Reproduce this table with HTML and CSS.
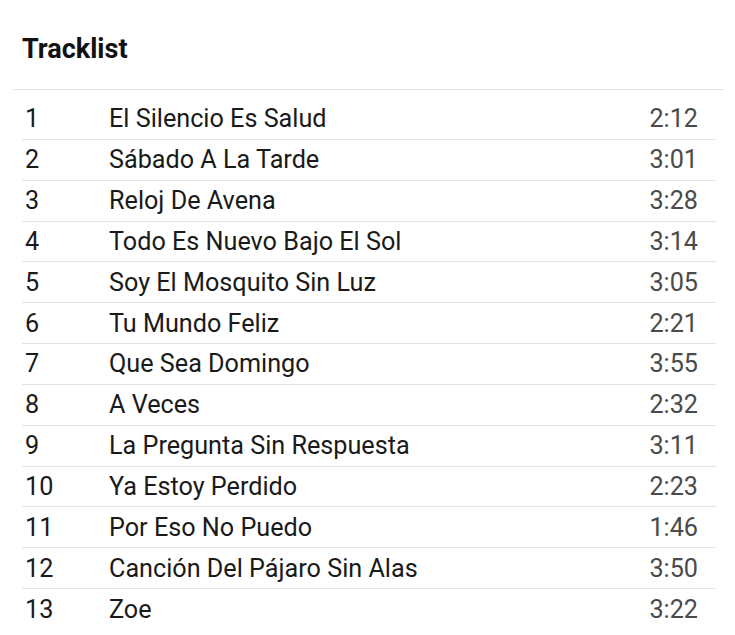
FILE: index.html
```html
<!DOCTYPE html>
<html>
<head>
<meta charset="utf-8">
<link rel="stylesheet" href="styles.css">
</head>
<body>
<div class="page">
  <h2 class="title">Tracklist</h2>
  <div class="list">
    <div class="row"><span class="num">1</span><span class="name">El Silencio Es Salud</span><span class="dur">2:12</span></div>
    <div class="row"><span class="num">2</span><span class="name">Sábado A La Tarde</span><span class="dur">3:01</span></div>
    <div class="row"><span class="num">3</span><span class="name">Reloj De Avena</span><span class="dur">3:28</span></div>
    <div class="row"><span class="num">4</span><span class="name">Todo Es Nuevo Bajo El Sol</span><span class="dur">3:14</span></div>
    <div class="row"><span class="num">5</span><span class="name">Soy El Mosquito Sin Luz</span><span class="dur">3:05</span></div>
    <div class="row"><span class="num">6</span><span class="name">Tu Mundo Feliz</span><span class="dur">2:21</span></div>
    <div class="row"><span class="num">7</span><span class="name">Que Sea Domingo</span><span class="dur">3:55</span></div>
    <div class="row"><span class="num">8</span><span class="name">A Veces</span><span class="dur">2:32</span></div>
    <div class="row"><span class="num">9</span><span class="name">La Pregunta Sin Respuesta</span><span class="dur">3:11</span></div>
    <div class="row"><span class="num">10</span><span class="name">Ya Estoy Perdido</span><span class="dur">2:23</span></div>
    <div class="row"><span class="num">11</span><span class="name">Por Eso No Puedo</span><span class="dur">1:46</span></div>
    <div class="row"><span class="num">12</span><span class="name">Canción Del Pájaro Sin Alas</span><span class="dur">3:50</span></div>
    <div class="row"><span class="num">13</span><span class="name">Zoe</span><span class="dur">3:22</span></div>
  </div>
</div>
</body>
</html>
```
FILE: styles.css
```css
html, body {
  margin: 0;
  padding: 0;
  background: #ffffff;
}
body {
  font-family: Roboto, "Liberation Sans", sans-serif;
  color: #1a1a1a;
}
.page {
  padding: 0 11px 0 13px;
}
.title {
  margin: 0;
  padding: 32px 0 0 9px;
  height: 89px;
  box-sizing: border-box;
  font-size: 27px;
  font-weight: 700;
  line-height: 34px;
  color: #111111;
}
.list {
  border-top: 1px solid #e2e2e2;
  padding: 9px 8px 0 9px;
}
.row {
  display: flex;
  align-items: center;
  height: 39.85px;
  border-bottom: 1px solid #e2e2e2;
  font-size: 25.2px;
}
.row:last-child {
  border-bottom: none;
}
.num {
  width: 84px;
  padding-left: 3px;
  color: #1a1a1a;
}
.name {
  flex: 1;
  color: #1a1a1a;
}
.dur {
  padding-right: 18px;
  color: #4a4a4a;
}
```
